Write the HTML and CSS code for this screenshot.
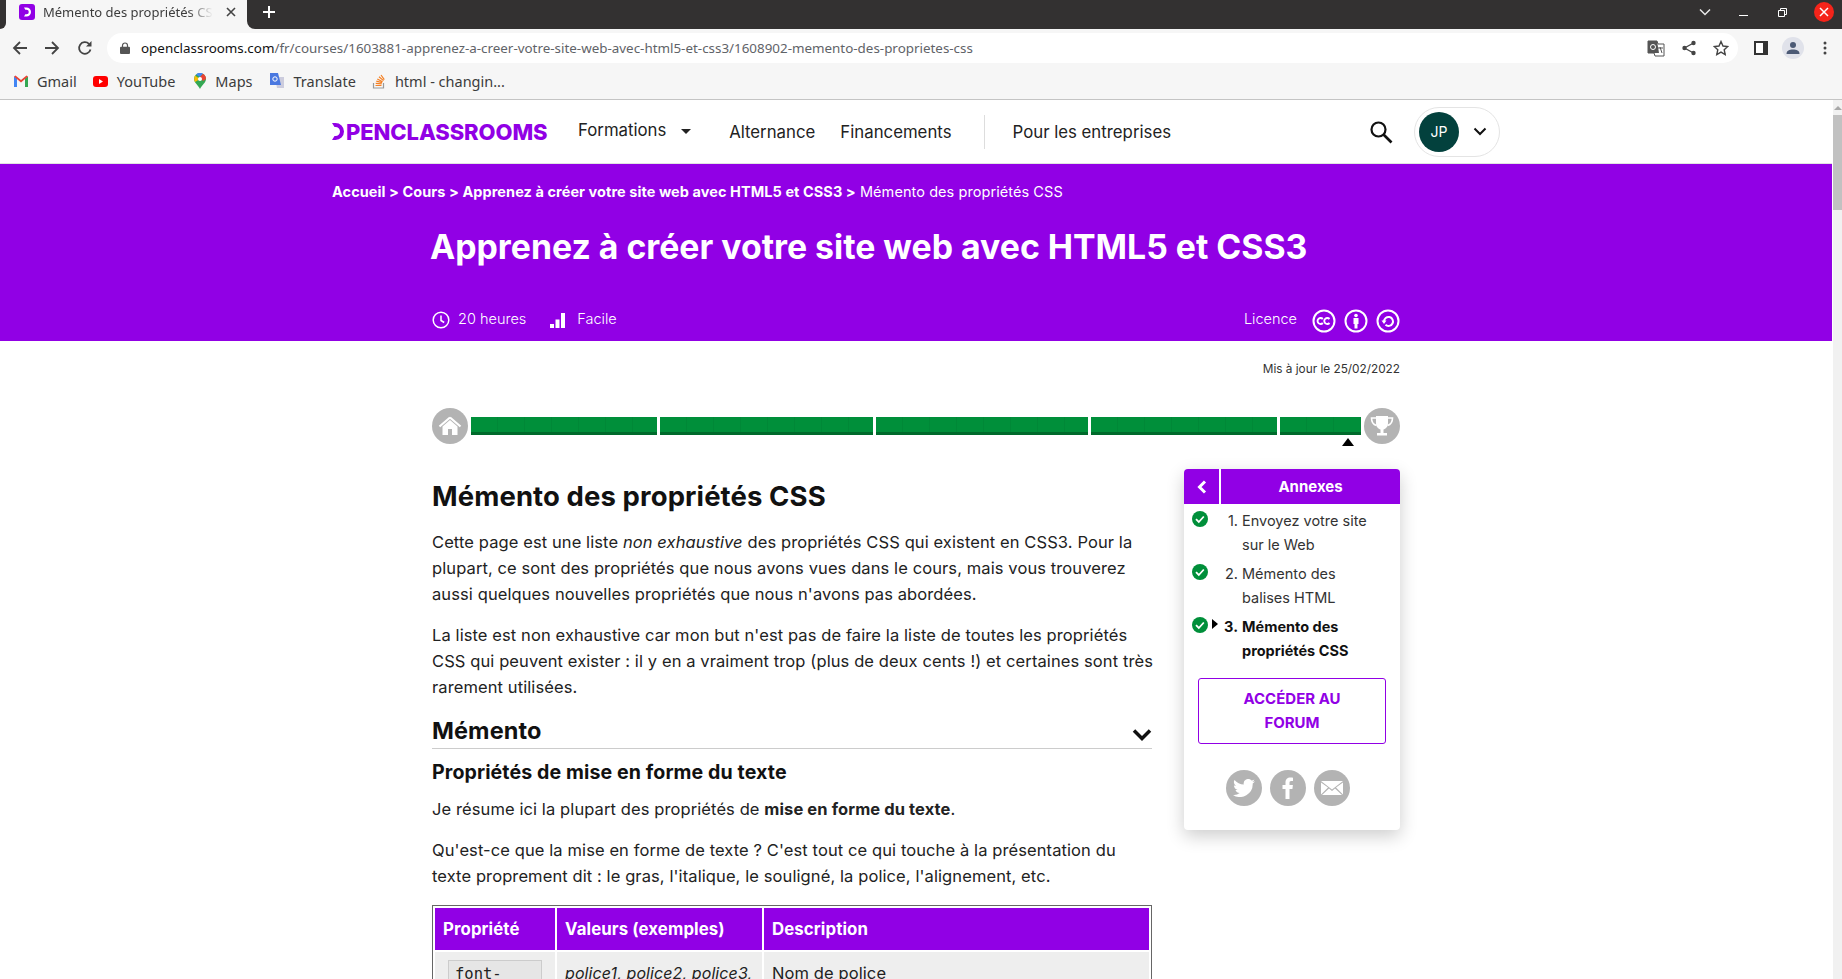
FILE: index.html
```html
<!DOCTYPE html>
<html lang="fr">
<head>
    <meta charset="UTF-8">
    <meta name="viewport" content="width=device-width, initial-scale=1.0">
    <title>Mémento des propriétés CSS</title>
    <link rel="stylesheet" href="styles.css">
</head>
<body>
    <div class="tabstrip">
        <div class="strip-corner"></div>
        <div class="tab">
            <svg class="favicon" width="16" height="16" viewBox="0 0 16 16"><rect width="16" height="16" rx="3" fill="#9100e5"/><path d="M5 3.500h2.500a4.500 4.500 0 0 1 0 9H5l1.300-2.200h1.200a2.300 2.300 0 0 0 0-4.600H6.300z" fill="#fff"/></svg>
            <span class="tab-title">Mémento des propriétés CSS</span>
            <svg class="tab-close" width="10" height="10" viewBox="0 0 10 10"><path d="M1 1l8 8M9 1L1 9" stroke="#444" stroke-width="1.600"/></svg>
        </div>
        <div class="strip-rest">
            <svg class="new-tab" width="14" height="14" viewBox="0 0 14 14"><path d="M7 1v12M1 7h12" stroke="#fff" stroke-width="2"/></svg>
            <svg class="win-chevron" width="12" height="8" viewBox="0 0 12 8"><path d="M1 1.500l5 5 5-5" fill="none" stroke="#e8e8e8" stroke-width="1.500"/></svg>
            <svg class="win-min" width="9" height="9" viewBox="0 0 9 9"><path d="M0 7.500h9" stroke="#fff" stroke-width="1"/></svg>
            <svg class="win-max" width="9" height="9" viewBox="0 0 9 9"><path d="M.5 2.500h6v6h-6zM2.500 2.500v-2h6v6h-2" fill="none" stroke="#fff"/></svg>
            <div class="win-close"><svg width="10" height="10" viewBox="0 0 10 10"><path d="M1 1l8 8M9 1L1 9" stroke="#fff" stroke-width="1.500"/></svg></div>
        </div>
    </div>

    <div class="toolbar">
        <svg class="tool-back" width="16" height="16" viewBox="0 0 16 16"><path d="M15 8H2M8 2L2 8l6 6" fill="none" stroke="#444" stroke-width="1.800"/></svg>
        <svg class="tool-fwd" width="16" height="16" viewBox="0 0 16 16"><path d="M1 8h13M8 2l6 6-6 6" fill="none" stroke="#444" stroke-width="1.800"/></svg>
        <svg class="tool-reload" width="16" height="16" viewBox="0 0 16 16"><path d="M13.500 9.500A5.800 5.800 0 1 1 12 3.900" fill="none" stroke="#444" stroke-width="1.800"/><path d="M14.500 1v5.500H9z" fill="#444"/></svg>
        <div class="address">
            <svg class="lock" width="10" height="12" viewBox="0 0 10 12"><path d="M2.500 5V3.500a2.500 2.500 0 0 1 5 0V5" fill="none" stroke="#555" stroke-width="1.200"/><rect y="4.800" width="10" height="7.200" rx="1" fill="#555"/></svg>
            <span class="url"><b>openclassrooms.com</b>/fr/courses/1603881-apprenez-a-creer-votre-site-web-avec-html5-et-css3/1608902-memento-des-proprietes-css</span>
            <div class="address-icons">
                <svg width="18" height="18" viewBox="0 0 18 18"><path d="M1 2h9l1 3h6v12H8l-1-3H1z" fill="#fff" stroke="#555"/><path d="M1 2h9l2 12H1z" fill="#555"/><circle cx="6" cy="8" r="2.500" fill="none" stroke="#fff"/><path d="M11 9h5M13 8l2 6" stroke="#555"/></svg>
                <svg width="16" height="16" viewBox="0 0 16 16"><path d="M12.500 3L3.500 8l9 5" fill="none" stroke="#444" stroke-width="1.300"/><circle cx="12.500" cy="3" r="2.200" fill="#444"/><circle cx="3.500" cy="8" r="2.200" fill="#444"/><circle cx="12.500" cy="13" r="2.200" fill="#444"/></svg>
                <svg width="16" height="16" viewBox="0 0 16 16"><path d="M8 1.500l2 4.500 4.800.5-3.600 3.200 1 4.800L8 12.100l-4.200 2.400 1-4.800L1.200 6.500 6 6z" fill="none" stroke="#444" stroke-width="1.400"/></svg>
            </div>
        </div>
        <svg class="tool-panel" width="14" height="14" viewBox="0 0 14 14"><rect x="1" y="1" width="12" height="12" fill="#fff" stroke="#333" stroke-width="2"/><rect x="9" y="1" width="4" height="12" fill="#333"/></svg>
        <div class="profile"><svg width="14" height="14" viewBox="0 0 14 14"><circle cx="7" cy="4" r="3" fill="#4c5a75"/><path d="M.5 13c0-3.500 3-4.500 6.500-4.500s6.500 1 6.500 4.500z" fill="#4c5a75"/></svg></div>
        <svg class="tool-dots" width="4" height="14" viewBox="0 0 4 14"><circle cx="2" cy="2" r="1.500" fill="#444"/><circle cx="2" cy="7" r="1.500" fill="#444"/><circle cx="2" cy="12" r="1.500" fill="#444"/></svg>
    </div>

    <div class="bookmarks">
        <div class="bookmark">
            <svg width="14" height="12" viewBox="0 0 14 12"><path d="M0 12V1.500L3 3v9z" fill="#4285f4"/><path d="M14 12V1.500L11 3v9z" fill="#34a853"/><path d="M0 1.500L1.500.5 7 5 12.500.5 14 1.500 7 7.500z" fill="#ea4335"/></svg>
            <span>Gmail</span>
        </div>
        <div class="bookmark">
            <svg width="15" height="11" viewBox="0 0 15 11"><rect width="15" height="11" rx="3" fill="#f00"/><path d="M6 3l4 2.500L6 8z" fill="#fff"/></svg>
            <span>YouTube</span>
        </div>
        <div class="bookmark bookmark-maps">
            <svg width="12" height="16" viewBox="0 0 12 16"><path d="M6 0a6 6 0 0 1 6 6c0 3.500-4 6-6 10C4 12 0 9.500 0 6a6 6 0 0 1 6-6z" fill="#34a853"/><path d="M1 2.500L6 6 1 9C0 7.500 0 4.500 1 2.500z" fill="#fbbc04"/><path d="M2 1.500A6 6 0 0 1 9 .8L6 4z" fill="#4285f4"/><path d="M9 .8A6 6 0 0 1 12 6L9 8 6 4z" fill="#ea4335"/><circle cx="6" cy="6" r="2" fill="#fff"/></svg>
            <span>Maps</span>
        </div>
        <div class="bookmark">
            <svg width="16" height="16" viewBox="0 0 16 16"><path d="M6 4h9v11H8z" fill="#ccd"/><path d="M1 0h8l3 12H1z" fill="#4a78e0"/><circle cx="6" cy="6" r="2.200" fill="none" stroke="#fff"/></svg>
            <span>Translate</span>
        </div>
        <div class="bookmark">
            <svg width="14" height="16" viewBox="0 0 14 16"><path d="M1.500 10v5h10v-5" fill="none" stroke="#999" stroke-width="1.200"/><path d="M3.500 12.500h6M3.700 10.300l6 .6M4.300 8.200l5.800 1.500M5.300 6l5.300 2.800M7 3.800l4.500 3.800M9 2l3.300 4.600" stroke="#f48024" stroke-width="1.200"/></svg>
            <span>html - changin...</span>
        </div>
    </div>

    <div class="page">
        <div class="site">
            <header class="site-nav">
                <div class="nav-inner">
                    <div class="logo">
                        <svg width="12" height="17" viewBox="0 0 12 17"><path d="M0 0h3.500a8.500 8.500 0 0 1 0 17H0l2.500-4h1a4.500 4.500 0 0 0 0-9h-1z" fill="#9100e5"/></svg>
                        <span>PENCLASSROOMS</span>
                    </div>
                    <a class="nav-link nav-formations">Formations <i class="caret"></i></a>
                    <a class="nav-link">Alternance</a>
                    <a class="nav-link">Financements</a>
                    <div class="nav-sep"></div>
                    <a class="nav-link">Pour les entreprises</a>
                    <svg class="nav-search" width="26" height="26" viewBox="0 0 26 26"><circle cx="10.500" cy="10.500" r="7" fill="none" stroke="#111" stroke-width="2.200"/><path d="M15.500 15.500l8 8" stroke="#111" stroke-width="2.600"/></svg>
                    <div class="user-pill">
                        <div class="avatar">JP</div>
                        <svg width="14" height="9" viewBox="0 0 14 9"><path d="M1.500 1.500L7 7l5.500-5.500" fill="none" stroke="#111" stroke-width="2"/></svg>
                    </div>
                </div>
            </header>

            <section class="hero">
                <div class="breadcrumb"><b>Accueil &gt; Cours &gt; Apprenez à créer votre site web avec HTML5 et CSS3 &gt;</b> Mémento des propriétés CSS</div>
                <div class="hero-inner">
                    <h1 class="course-title">Apprenez à créer votre site web avec HTML5 et CSS3</h1>
                    <div class="course-meta">
                        <svg width="18" height="18" viewBox="0 0 18 18"><circle cx="9" cy="9" r="7.800" fill="none" stroke="#fff" stroke-width="1.500"/><path d="M9 4.500V9.500l3.200 2" fill="none" stroke="#fff" stroke-width="1.500"/></svg>
                        <span class="meta-time">20 heures</span>
                        <svg width="15" height="15" viewBox="0 0 15 15"><path d="M0 11h4v4H0zM5.500 6.500h4V15h-4zM11 0h4v15h-4z" fill="#fff"/></svg>
                        <span class="meta-level">Facile</span>
                        <span class="licence">Licence</span>
                        <svg class="cc" width="24" height="24" viewBox="0 0 24 24"><circle cx="12" cy="12" r="10.500" fill="none" stroke="#fff" stroke-width="2"/><path d="M10.800 10a3 3 0 1 0 0 4M17.500 10a3 3 0 1 0 0 4" fill="none" stroke="#fff" stroke-width="1.900"/></svg>
                        <svg class="cc" width="24" height="24" viewBox="0 0 24 24"><circle cx="12" cy="12" r="10.500" fill="none" stroke="#fff" stroke-width="2"/><circle cx="12" cy="6.500" r="1.800" fill="#fff"/><path d="M9.500 9h5v6h-1v4.500h-3V15h-1z" fill="#fff"/></svg>
                        <svg class="cc" width="24" height="24" viewBox="0 0 24 24"><circle cx="12" cy="12" r="10.500" fill="none" stroke="#fff" stroke-width="2"/><path d="M8 12.500a4.500 4.500 0 1 1 1.500 3.300" fill="none" stroke="#fff" stroke-width="2"/><path d="M5.500 11.500h5L8 15z" fill="#fff"/></svg>
                    </div>
                </div>
            </section>

            <div class="content">
                <p class="updated">Mis à jour le 25/02/2022</p>

                <div class="progress">
                    <div class="progress-end">
                        <svg width="24" height="22" viewBox="0 0 24 22"><path d="M12 2.500L1.500 11.500M12 2.500l10.500 9" fill="none" stroke="#fff" stroke-width="2.200"/><path d="M4.500 11.500L12 5l7.500 6.500V20H14v-6h-4v6H4.500z" fill="#fff"/></svg>
                    </div>
                    <div class="progress-seg seg-1"></div>
                    <div class="progress-seg seg-2"></div>
                    <div class="progress-seg seg-2"></div>
                    <div class="progress-seg seg-1"></div>
                    <div class="progress-seg seg-5"><i class="progress-here"></i></div>
                    <div class="progress-end">
                        <svg width="24" height="24" viewBox="0 0 24 24"><path d="M6 2h12v7c0 4-2.500 6-4.500 6.500V19H17v2.500H7V19h3.500v-3.500C8.500 15 6 13 6 9z" fill="#fff"/><path d="M6 4H1.500c0 4 1.500 6.500 5 7.500M18 4h4.500c0 4-1.500 6.500-5 7.500" fill="none" stroke="#fff" stroke-width="1.600"/></svg>
                    </div>
                </div>

                <div class="columns">
                    <main class="article">
                        <h2 class="chapter-title">Mémento des propriétés CSS</h2>
                        <p class="wide-gap">Cette page est une liste <em>non exhaustive</em> des propriétés CSS qui existent en CSS3. Pour la<br>plupart, ce sont des propriétés que nous avons vues dans le cours, mais vous trouverez<br>aussi quelques nouvelles propriétés que nous n'avons pas abordées.</p>
                        <p>La liste est non exhaustive car mon but n'est pas de faire la liste de toutes les propriétés<br>CSS qui peuvent exister : il y en a vraiment trop (plus de deux cents !) et certaines sont très<br>rarement utilisées.</p>
                        <div class="section-head">
                            <h3>Mémento</h3>
                            <svg width="20" height="13" viewBox="0 0 20 13"><path d="M2 2.500l8 8 8-8" fill="none" stroke="#111" stroke-width="3.500"/></svg>
                        </div>
                        <h4>Propriétés de mise en forme du texte</h4>
                        <p class="wide-gap">Je résume ici la plupart des propriétés de <b>mise en forme du texte</b>.</p>
                        <p>Qu'est-ce que la mise en forme de texte ? C'est tout ce qui touche à la présentation du<br>texte proprement dit : le gras, l'italique, le souligné, la police, l'alignement, etc.</p>
                        <table class="props">
                            <tr>
                                <th class="col-prop">Propriété</th>
                                <th class="col-val">Valeurs (exemples)</th>
                                <th>Description</th>
                            </tr>
                            <tr>
                                <td class="cell-code"><code>font-<br>family</code></td>
                                <td class="cell-values"><em>police1, police2, police3,</em></td>
                                <td>Nom de police</td>
                            </tr>
                        </table>
                    </main>

                    <aside class="toc">
                        <div class="toc-head">
                            <div class="toc-back"><svg width="10" height="14" viewBox="0 0 10 14"><path d="M8 1.500L2.500 7 8 12.500" fill="none" stroke="#fff" stroke-width="3"/></svg></div>
                            <div class="toc-title">Annexes</div>
                        </div>
                        <ol class="toc-list">
                            <li class="toc-item">
                                <svg class="check" width="16" height="16" viewBox="0 0 16 16"><circle cx="8" cy="8" r="8" fill="#008f3a"/><path d="M4 8.200l2.800 2.800 5-5.500" fill="none" stroke="#fff" stroke-width="1.800"/></svg>
                                <span class="toc-num">1.</span>
                                <span class="toc-text">Envoyez votre site<br>sur le Web</span>
                            </li>
                            <li class="toc-item">
                                <svg class="check" width="16" height="16" viewBox="0 0 16 16"><circle cx="8" cy="8" r="8" fill="#008f3a"/><path d="M4 8.200l2.800 2.800 5-5.500" fill="none" stroke="#fff" stroke-width="1.800"/></svg>
                                <span class="toc-num">2.</span>
                                <span class="toc-text">Mémento des<br>balises HTML</span>
                            </li>
                            <li class="toc-item toc-current">
                                <svg class="check" width="16" height="16" viewBox="0 0 16 16"><circle cx="8" cy="8" r="8" fill="#008f3a"/><path d="M4 8.200l2.800 2.800 5-5.500" fill="none" stroke="#fff" stroke-width="1.800"/></svg>
                                <i class="toc-arrow"></i>
                                <span class="toc-num">3.</span>
                                <span class="toc-text">Mémento des<br>propriétés CSS</span>
                            </li>
                        </ol>
                        <a class="forum-btn">ACCÉDER AU<br>FORUM</a>
                        <div class="share">
                            <div class="share-btn"><svg width="22" height="18" viewBox="0 0 22 18"><path d="M22 2.200c-.8.400-1.700.600-2.600.700.900-.6 1.600-1.400 2-2.500-.9.500-1.800.900-2.900 1.100A4.500 4.500 0 0 0 10.800 5.600C7.100 5.400 3.700 3.600 1.500.9c-1.200 2-.6 4.600 1.400 6-.7 0-1.400-.2-2-.6 0 2.200 1.500 4.100 3.600 4.500-.7.200-1.400.2-2 .1.600 1.800 2.200 3.100 4.200 3.100A9 9 0 0 1 0 15.900 12.800 12.800 0 0 0 19.700 4.500c.9-.6 1.700-1.400 2.300-2.300z" fill="#fff"/></svg></div>
                            <div class="share-btn"><svg width="12" height="22" viewBox="0 0 12 22"><path d="M3.500 22V12H.5V8h3V5.500C3.500 2 5.500.5 8.300.5c1.300 0 2.700.2 2.700.2V4H9.300C7.800 4 7.500 4.900 7.500 5.800V8h3.400l-.5 4H7.500v10z" fill="#fff"/></svg></div>
                            <div class="share-btn"><svg width="22" height="14" viewBox="0 0 22 14"><path d="M0 0h22L11 8.500zM0 1.500v12l7-7zM22 1.500v12l-7-7zM1 14l7-6.500 3 2.500 3-2.500 7 6.500z" fill="#fff"/></svg></div>
                        </div>
                    </aside>
                </div>
            </div>
        </div>

        <div class="scrollbar">
            <i class="scroll-up"></i>
            <div class="scroll-thumb"></div>
        </div>
    </div>
</body>
</html>
```

FILE: styles.css
```css
html, body {
    height: 979px;
    margin: 0;
    overflow: hidden;
}

body {
    font-family: "Inter", "Noto Sans", sans-serif;
    background-color: #fff;
    color: #1a1a1a;
    display: flex;
    flex-direction: column;
}

/* browser chrome */
.tabstrip {
    display: flex;
    height: 29px;
    background-color: #f6f6f6;
    font-family: "Noto Sans", sans-serif;
}

.strip-corner {
    width: 6px;
    background-color: #333131;
    border-bottom-right-radius: 8px;
}

.tab {
    width: 241px;
    display: flex;
    align-items: center;
    padding: 0 12px 5px 13px;
    box-sizing: border-box;
    font-size: 13px;
    color: #3c3c3c;
}

.favicon {
    flex: none;
}

.tab-title {
    margin-left: 8px;
    width: 170px;
    white-space: nowrap;
    overflow: hidden;
    flex: none;
    -webkit-mask-image: linear-gradient(to right, #000 85%, transparent);
}

.tab-close {
    margin-left: 13px;
    flex: none;
}

.strip-rest {
    flex: 1;
    display: flex;
    align-items: center;
    padding-bottom: 5px;
    background-color: #333131;
    border-bottom-left-radius: 8px;
}

.new-tab { margin-left: 15px; }
.win-chevron { margin-left: auto; }
.win-min { margin-left: 28px; }
.win-max { margin-left: 30px; }

.win-close {
    width: 20px;
    height: 20px;
    margin: 0 8px 0 27px;
    border-radius: 50%;
    background-color: #f5241a;
    display: flex;
    align-items: center;
    justify-content: center;
}

.toolbar {
    display: flex;
    align-items: center;
    height: 37px;
    background-color: #f6f6f6;
    padding-left: 12px;
}

.tool-fwd { margin-left: 16px; }
.tool-reload { margin-left: 17px; }

.address {
    width: 1631px;
    height: 30px;
    margin-left: 14px;
    margin-top: 1px;
    border-radius: 15px;
    background-color: #fff;
    display: flex;
    align-items: center;
    padding-left: 13px;
    box-sizing: border-box;
    flex: none;
}

.url {
    margin-left: 11px;
    font-family: "Noto Sans", sans-serif;
    font-size: 13.4px;
    color: #5f6368;
    white-space: nowrap;
}

.url b {
    font-weight: 400;
    color: #111;
}

.address-icons {
    margin-left: auto;
    margin-right: 9px;
    display: flex;
    align-items: center;
    gap: 16px;
}

.tool-panel { margin-left: 16px; }

.profile {
    width: 22px;
    height: 22px;
    margin-left: 14px;
    border-radius: 50%;
    background-color: #e0e2ea;
    display: flex;
    align-items: center;
    justify-content: center;
}

.tool-dots { margin-left: 19px; }

.bookmarks {
    display: flex;
    align-items: center;
    height: 33px;
    padding-left: 14px;
    background-color: #f6f6f6;
    border-bottom: 1px solid #c4c4c4;
    font-family: "Noto Sans", sans-serif;
    font-size: 14.500px;
    color: #3c3c3c;
}

.bookmark {
    display: flex;
    align-items: center;
    gap: 9px;
    margin-right: 16px;
    margin-bottom: 3px;
    white-space: nowrap;
}

.bookmark-maps { margin-left: 3px; }

/* page */
.page {
    flex: 1;
    display: flex;
    min-height: 0;
}

.site {
    flex: 1;
    min-width: 0;
    padding-right: 1px;
    overflow: hidden;
}

.site-nav {
    height: 63px;
    border-bottom: 1px solid #e2e2e2;
}

.nav-inner {
    width: 1168px;
    height: 63px;
    margin: 0 auto;
    display: flex;
    align-items: center;
}

.logo {
    display: flex;
    align-items: center;
    gap: 2px;
    width: 246px;
    font-size: 22px;
    font-weight: 800;
    color: #9100e5;
    letter-spacing: -0.1px;
}

.nav-link {
    font-size: 16.800px;
    color: #222;
    margin-right: 25px;
    white-space: nowrap;
}

.nav-formations {
    margin-right: 38px;
    margin-top: -3px;
}

.caret {
    display: inline-block;
    width: 0;
    height: 0;
    margin-left: 10px;
    vertical-align: 2px;
    border-left: 5px solid transparent;
    border-right: 5px solid transparent;
    border-top: 5px solid #222;
}

.nav-sep {
    width: 1px;
    height: 34px;
    background-color: #ddd;
    margin-left: 7px;
    margin-right: 28px;
}

.nav-search { margin-left: auto; }

.user-pill {
    width: 86px;
    height: 50px;
    margin-left: 20px;
    box-sizing: border-box;
    border: 1px solid #e4e4e4;
    border-radius: 25px;
    display: flex;
    align-items: center;
    gap: 14px;
    padding-left: 4px;
}

.avatar {
    width: 40px;
    height: 40px;
    border-radius: 50%;
    background-color: #03413d;
    color: #fff;
    font-size: 14px;
    display: flex;
    align-items: center;
    justify-content: center;
}

.hero {
    height: 177px;
    background-color: #9100e5;
    color: #fff;
    overflow: hidden;
}

.breadcrumb {
    width: 1168px;
    margin: 19px auto 0;
    font-size: 14.500px;
    line-height: 18px;
    letter-spacing: 0.07px;
    white-space: nowrap;
}

.breadcrumb b { font-weight: 700; }

.hero-inner {
    width: 968px;
    margin: 0 auto;
}

.course-title {
    margin: 24px 0 0 -2px;
    font-size: 33.800px;
    font-weight: 700;
    line-height: 44px;
    white-space: nowrap;
}

.course-meta {
    display: flex;
    align-items: center;
    margin-top: 38px;
    font-size: 14.500px;
    font-weight: 300;
}

.course-meta span { margin-bottom: 4px; }

.meta-time { margin: 0 24px 0 8px; }
.meta-level { margin-left: 12px; }
.licence { margin-left: auto; margin-right: 7px; }
.cc { margin: 2px 0 0 8px; }

.content {
    width: 968px;
    margin: 0 auto;
}

.updated {
    margin: 19px 0 0;
    text-align: right;
    font-size: 11.800px;
    line-height: 18px;
    color: #333;
}

.progress {
    display: flex;
    align-items: center;
    gap: 3px;
    margin-top: 29px;
    height: 38px;
}

.progress-end {
    width: 36px;
    height: 36px;
    flex: none;
    border-radius: 50%;
    background-color: #b3b3b3;
    display: flex;
    align-items: center;
    justify-content: center;
}

.progress-seg {
    position: relative;
    height: 15px;
    margin-top: -1px;
    background-color: #008f3a;
    background-image: repeating-linear-gradient(to right, transparent 0, transparent 26px, rgba(0, 0, 0, 0.05) 26px, rgba(0, 0, 0, 0.05) 27px);
    border-bottom: 3px solid #006a2b;
}

.seg-1 { width: 186px; }
.seg-2 { width: 213px; }
.seg-5 { width: 81px; }

.progress-here {
    position: absolute;
    right: 7px;
    top: 21px;
    width: 0;
    height: 0;
    border-left: 6px solid transparent;
    border-right: 6px solid transparent;
    border-bottom: 8px solid #000;
}

.columns {
    display: flex;
    gap: 32px;
    margin-top: 24px;
    align-items: flex-start;
}

.article {
    width: 720px;
    flex: none;
    font-size: 16.500px;
    letter-spacing: 0.1px;
    line-height: 26px;
    color: #222;
}

.article p {
    margin: 0 0 14px;
    white-space: nowrap;
}

.article p.wide-gap { margin-bottom: 15px; }

.chapter-title {
    margin: 9px 0 15px;
    font-size: 27.500px;
    line-height: 36px;
    font-weight: 700;
    color: #111;
}

.section-head {
    display: flex;
    align-items: center;
    justify-content: space-between;
    height: 34px;
    margin-bottom: 9px;
    border-bottom: 1px solid #ccc;
}

.section-head h3 {
    margin: 0;
    font-size: 23.500px;
    font-weight: 700;
    color: #111;
}

.section-head svg { margin-top: 6px; }

.article h4 {
    margin: 0 0 10px;
    font-size: 19.600px;
    line-height: 28px;
    font-weight: 700;
    color: #111;
}

.props {
    margin-top: 16px;
    width: 720px;
    table-layout: fixed;
    border: 1px solid #666;
    border-spacing: 2px;
    border-collapse: separate;
}

.props th {
    height: 42px;
    padding: 0 8px;
    text-align: left;
    background-color: #9100e5;
    color: #fff;
    font-size: 16.800px;
    font-weight: 700;
}

.col-prop { width: 104px; }
.col-val { width: 189px; }

.props td {
    padding: 8px;
    vertical-align: top;
    background-color: #eee;
}

.props .cell-values {
    white-space: nowrap;
    font-size: 16px;
}

.props .cell-code { padding: 8px 13px; }

.props code {
    display: block;
    padding: 0 6px;
    border: 1px solid #ccc;
    background-color: #e6e6e6;
    font-family: "DejaVu Sans Mono", monospace;
    font-size: 15.500px;
    letter-spacing: 0;
}

.toc {
    width: 216px;
    height: 361px;
    flex: none;
    border-radius: 4px;
    background-color: #fff;
    box-shadow: 0 6px 18px rgba(0, 0, 0, 0.2);
    font-size: 14.500px;
    line-height: 24px;
    color: #333;
}

.toc-head {
    display: flex;
    gap: 2px;
    height: 35px;
    color: #fff;
}

.toc-back {
    width: 35px;
    background-color: #9100e5;
    border-top-left-radius: 4px;
    display: flex;
    align-items: center;
    justify-content: center;
}

.toc-title {
    flex: 1;
    background-color: #9100e5;
    border-top-right-radius: 4px;
    text-align: center;
    font-size: 15px;
    font-weight: 700;
    line-height: 35px;
}

.toc-list {
    list-style: none;
    margin: 5px 0 10px;
    padding: 0;
}

.toc-item {
    position: relative;
    display: flex;
    height: 53px;
    padding-left: 40px;
}

.check {
    position: absolute;
    left: 8px;
    top: 2px;
}

.toc-arrow {
    position: absolute;
    left: 28px;
    top: 4px;
    width: 0;
    height: 0;
    border-top: 5px solid transparent;
    border-bottom: 5px solid transparent;
    border-left: 6px solid #000;
}

.toc-num {
    width: 14px;
    text-align: right;
    flex: none;
    white-space: nowrap;
}

.toc-text {
    margin-left: 4px;
    white-space: nowrap;
}

.toc-current {
    font-weight: 700;
    color: #111;
}

.forum-btn {
    display: block;
    margin: 0 14px;
    height: 66px;
    box-sizing: border-box;
    padding-top: 8px;
    border: 1px solid #9100e5;
    border-radius: 3px;
    text-align: center;
    font-size: 15px;
    color: #9100e5;
    font-weight: 700;
}

.share {
    display: flex;
    justify-content: center;
    gap: 8px;
    margin-top: 26px;
    padding-right: 8px;
}

.share-btn {
    width: 36px;
    height: 36px;
    border-radius: 50%;
    background-color: #b3b3b3;
    display: flex;
    align-items: center;
    justify-content: center;
}

.scrollbar {
    width: 9px;
    flex: none;
    position: relative;
    background-color: #f1f1f1;
}

.scroll-up {
    position: absolute;
    left: 1px;
    top: 6px;
    width: 0;
    height: 0;
    border-left: 4px solid transparent;
    border-right: 4px solid transparent;
    border-bottom: 4px solid #a8a8a8;
}

.scroll-thumb {
    margin-top: 15px;
    height: 95px;
    background-color: #c1c1c1;
}
```
